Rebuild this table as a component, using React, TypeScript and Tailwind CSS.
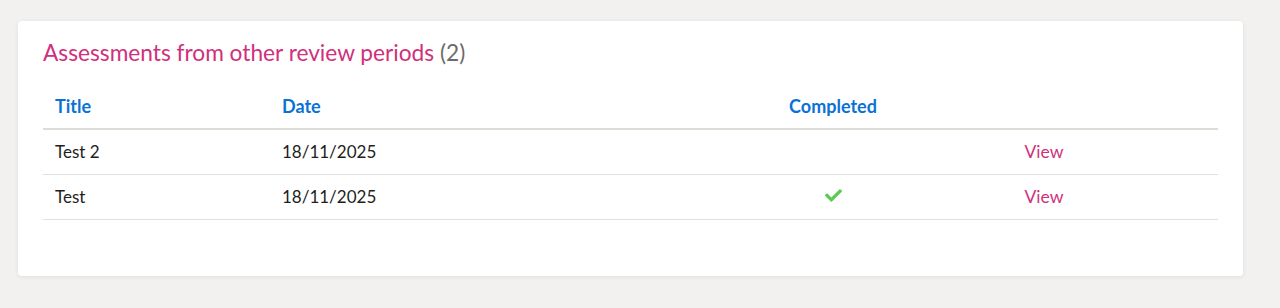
import React from "react";
import { FaCheck } from "react-icons/fa";

const rows = [
  { title: "Test 2", date: "18/11/2025", completed: false },
  { title: "Test", date: "18/11/2025", completed: true },
];

export default function App() {
  return (
    <div
      className="min-h-[308px] bg-[#f2f1ef] pt-[21px] pl-[18px] pr-[37px]"
      style={{ fontFamily: "Lato, 'Open Sans', sans-serif" }}
    >
      <div className="rounded-[4px] bg-white px-[25px] pt-[17px] pb-[56px] shadow-[0_1px_5px_rgba(0,0,0,0.08)]">
        <h2 className="text-[22.7px] leading-[30px] text-[#d0307c]">
          Assessments from other review periods{" "}
          <span className="text-[#6b6b6b]">(2)</span>
        </h2>
        <table className="mt-[16px] w-full table-fixed border-collapse text-[17px] leading-[24px]">
          <colgroup>
            <col className="w-[227px]" />
            <col className="w-[450px]" />
            <col className="w-[226px]" />
            <col className="w-[196px]" />
            <col />
          </colgroup>
          <thead>
            <tr className="border-b-2 border-[#dddcd7]">
              <th className="px-[12px] py-[10px] text-left text-[18px] font-bold text-[#0a72d6]">Title</th>
              <th className="px-[12px] py-[10px] text-left text-[18px] font-bold text-[#0a72d6]">Date</th>
              <th className="px-[12px] py-[10px] text-center text-[18px] font-bold text-[#0a72d6]">Completed</th>
              <th className="px-[12px] py-[10px]"></th>
              <th className="px-[12px] py-[10px]"></th>
            </tr>
          </thead>
          <tbody>
            {rows.map((r) => (
              <tr key={r.title} className="border-b border-[#e0e0e0]">
                <td className="px-[12px] py-[10px] text-[#221e1c]">{r.title}</td>
                <td className="px-[12px] py-[10px] text-[#221e1c]">{r.date}</td>
                <td className="h-[44px] px-[12px] py-[10px] align-top">
                  {r.completed && (
                    <div className="flex h-[24px] justify-center pt-[2px]">
                      <FaCheck className="h-[17px] w-[17px] text-[#5ccb4f]" />
                    </div>
                  )}
                </td>
                <td className="px-[12px] py-[10px] text-center text-[17.5px]">
                  <a className="cursor-pointer text-[#d0307c]">View</a>
                </td>
                <td></td>
              </tr>
            ))}
          </tbody>
        </table>
      </div>
    </div>
  );
}
